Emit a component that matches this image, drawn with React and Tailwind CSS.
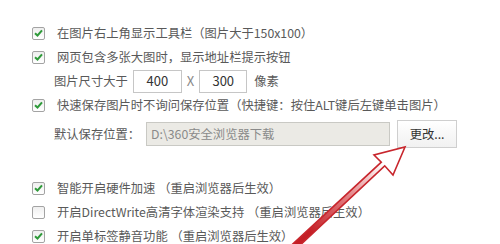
import React from "react";

const font = { fontFamily: '"Noto Sans CJK SC", "Noto Sans", sans-serif' };

function Box({ checked }) {
  return (
    <span className="w-[13px] h-[13px] shrink-0 rounded-[2px] border border-[#a3a3a3] bg-gradient-to-b from-[#efefef] to-[#ffffff] flex items-center justify-center">
      {checked && (
        <svg width="9" height="8" viewBox="0 0 9 8">
          <path d="M1 4.2 L3.5 6.5 L8 1.3" fill="none" stroke="#2f9a3a" strokeWidth="2" />
        </svg>
      )}
    </span>
  );
}

function CheckRow({ checked, children }) {
  return (
    <div className="h-6 flex items-center">
      <Box checked={checked} />
      <span className="ml-[12px] whitespace-nowrap">{children}</span>
    </div>
  );
}

function Arrow() {
  return (
    <svg className="absolute left-0 top-0 pointer-events-none" width="500" height="244">
      <defs>
        <linearGradient id="shaft" gradientUnits="userSpaceOnUse" x1="383" y1="164" x2="310" y2="232">
          <stop offset="0" stopColor="#ffffff" />
          <stop offset="0.5" stopColor="#e27b7e" />
          <stop offset="1" stopColor="#c41f26" />
        </linearGradient>
      </defs>
      <polygon
        points="286.5,249.8 381.3,162.2 374,155 405,147 393,175 384.7,165.8 290.5,254.2"
        fill="url(#shaft)"
        stroke="#c8262d"
        strokeWidth="1.6"
        strokeLinejoin="miter"
      />
    </svg>
  );
}

export default function App() {
  return (
    <div className="relative w-[500px] h-[244px] bg-white overflow-hidden text-[12.3px] text-[#595959]" style={font}>
      <div className="pt-[21px] pl-[32px]">
        <CheckRow checked>在图片右上角显示工具栏（图片大于150x100）</CheckRow>
        <CheckRow checked>网页包含多张大图时，显示地址栏提示按钮</CheckRow>
        <div className="h-6 flex items-center pl-[22px]">
          <span>图片尺寸大于</span>
          <div className="ml-[5px] w-[49px] h-[23px] border border-[#c6c6c6] bg-white flex items-center justify-center text-[13px] text-[#333333]">400</div>
          <span className="mx-[5px] text-[13px] text-[#888888]">X</span>
          <div className="w-[48px] h-[23px] border border-[#c6c6c6] bg-white flex items-center justify-center text-[13px] text-[#333333]">300</div>
          <span className="ml-[7px]">像素</span>
        </div>
        <CheckRow checked>快速保存图片时不询问保存位置（快捷键：按住ALT键后左键单击图片）</CheckRow>
        <div className="mt-[3px] h-[28px] flex items-center pl-[22px]">
          <span>默认保存位置：</span>
          <div className="ml-[6px] w-[244px] h-[24px] border border-[#c9c9c4] bg-[#ebeae5] flex items-center pl-[4px] text-[#8a8a8a]">D:\360安全浏览器下载</div>
          <div className="ml-[7px] w-[60px] h-[28px] border border-[#cfcfcf] bg-gradient-to-b from-[#ffffff] to-[#f1f1f1] flex items-center justify-center text-[#333333]">更改...</div>
        </div>
        <div className="mt-[28px]">
          <CheckRow checked>智能开启硬件加速 （重启浏览器后生效）</CheckRow>
          <CheckRow>开启DirectWrite高清字体渲染支持 （重启浏览器后生效）</CheckRow>
          <CheckRow checked>开启单标签静音功能 （重启浏览器后生效）</CheckRow>
        </div>
      </div>
      <Arrow />
    </div>
  );
}
